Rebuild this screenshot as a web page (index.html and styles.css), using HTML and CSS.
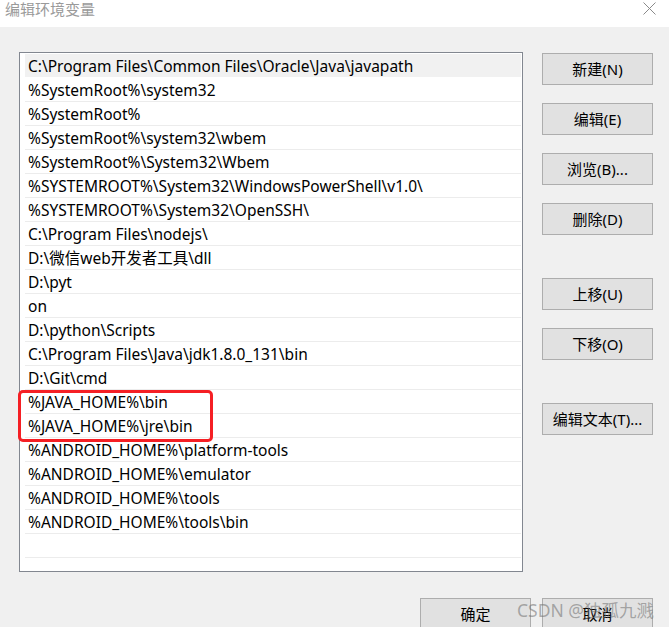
FILE: index.html
```html
<!DOCTYPE html>
<html lang="zh-CN">
<head>
  <meta charset="UTF-8" />
  <title>编辑环境变量</title>
  <link rel="stylesheet" href="styles.css">
</head>
<body>
  <div class="window">
    <div class="titlebar">
      <span class="title">编辑环境变量</span>
      <svg class="close" width="13" height="13" viewBox="0 0 13 13">
        <path d="M0.5 0.5 L12.5 12.5 M12.5 0.5 L0.5 12.5" stroke="#8a8a8a" stroke-width="1" fill="none"/>
      </svg>
    </div>

    <div class="main">
      <div class="list">
        <div class="row selected">C:\Program Files\Common Files\Oracle\Java\javapath</div>
        <div class="row">%SystemRoot%\system32</div>
        <div class="row">%SystemRoot%</div>
        <div class="row">%SystemRoot%\system32\wbem</div>
        <div class="row">%SystemRoot%\System32\Wbem</div>
        <div class="row">%SYSTEMROOT%\System32\WindowsPowerShell\v1.0\</div>
        <div class="row">%SYSTEMROOT%\System32\OpenSSH\</div>
        <div class="row">C:\Program Files\nodejs\</div>
        <div class="row">D:\微信web开发者工具\dll</div>
        <div class="row">D:\pyt</div>
        <div class="row">on</div>
        <div class="row">D:\python\Scripts</div>
        <div class="row">C:\Program Files\Java\jdk1.8.0_131\bin</div>
        <div class="row">D:\Git\cmd</div>
        <div class="row">%JAVA_HOME%\bin</div>
        <div class="row">%JAVA_HOME%\jre\bin</div>
        <div class="row">%ANDROID_HOME%\platform-tools</div>
        <div class="row">%ANDROID_HOME%\emulator</div>
        <div class="row">%ANDROID_HOME%\tools</div>
        <div class="row">%ANDROID_HOME%\tools\bin</div>
        <div class="row"></div>
        <div class="row"></div>
      </div>

      <div class="side-buttons">
        <div class="group">
          <button>新建(N)</button>
          <button>编辑(E)</button>
          <button>浏览(B)...</button>
          <button>删除(D)</button>
        </div>
        <div class="group">
          <button>上移(U)</button>
          <button>下移(O)</button>
        </div>
        <div class="group">
          <button>编辑文本(T)...</button>
        </div>
      </div>
    </div>

    <div class="footer">
      <button>确定</button>
      <button>取消</button>
    </div>

    <div class="highlight"></div>
    <div class="watermark">CSDN @独孤九溅</div>
  </div>
</body>
</html>
```

FILE: styles.css
```css
body {
  margin: 0;
  background: #f0f0f0;
  font-family: "Noto Sans", "Noto Sans CJK SC", sans-serif;
  color: #000;
}

.window {
  position: relative;
  width: 669px;
  height: 627px;
  overflow: hidden;
}

.titlebar {
  height: 27px;
  background: #ffffff;
  display: flex;
  justify-content: space-between;
  align-items: flex-start;
  padding: 0 13px 0 5px;
  box-sizing: border-box;
}

.title {
  font-size: 15px;
  color: #9a9a9a;
  line-height: 18px;
}

.close {
  margin-top: 2px;
}

.main {
  display: flex;
  padding: 25px 0 0 19px;
}

.list {
  width: 504px;
  height: 520px;
  box-sizing: border-box;
  border: 1px solid #828790;
  background: #ffffff;
  padding: 1px 1px 0 5px;
  overflow: hidden;
}

.row {
  height: 24px;
  box-sizing: border-box;
  border-bottom: 1px solid #ececec;
  padding: 1px 0 0 3px;
  font-size: 15.5px;
  line-height: 22px;
  white-space: nowrap;
}

.row.selected {
  background: #f1f1f1;
  border-bottom-color: #ffffff;
}

.side-buttons {
  margin: 1px 0 0 19px;
  display: flex;
  flex-direction: column;
  gap: 43px;
}

.group {
  display: flex;
  flex-direction: column;
  gap: 18px;
}

button {
  width: 111px;
  height: 32px;
  background: #e1e1e1;
  border: 1px solid #adadad;
  border-radius: 0;
  font-family: "Noto Sans", "Noto Sans CJK SC", sans-serif;
  font-size: 15px;
  color: #000;
  padding: 0 0 2px;
}

.footer {
  display: flex;
  justify-content: flex-end;
  gap: 11px;
  padding: 26px 16px 0 0;
}

.highlight {
  position: absolute;
  left: 18px;
  top: 390px;
  width: 195px;
  height: 52px;
  box-sizing: border-box;
  border: 3px solid #f51f24;
  border-radius: 5px;
}

.watermark {
  position: absolute;
  left: 517px;
  top: 597px;
  font-size: 17.5px;
  color: rgba(110, 110, 110, 0.55);
  white-space: nowrap;
}
```
